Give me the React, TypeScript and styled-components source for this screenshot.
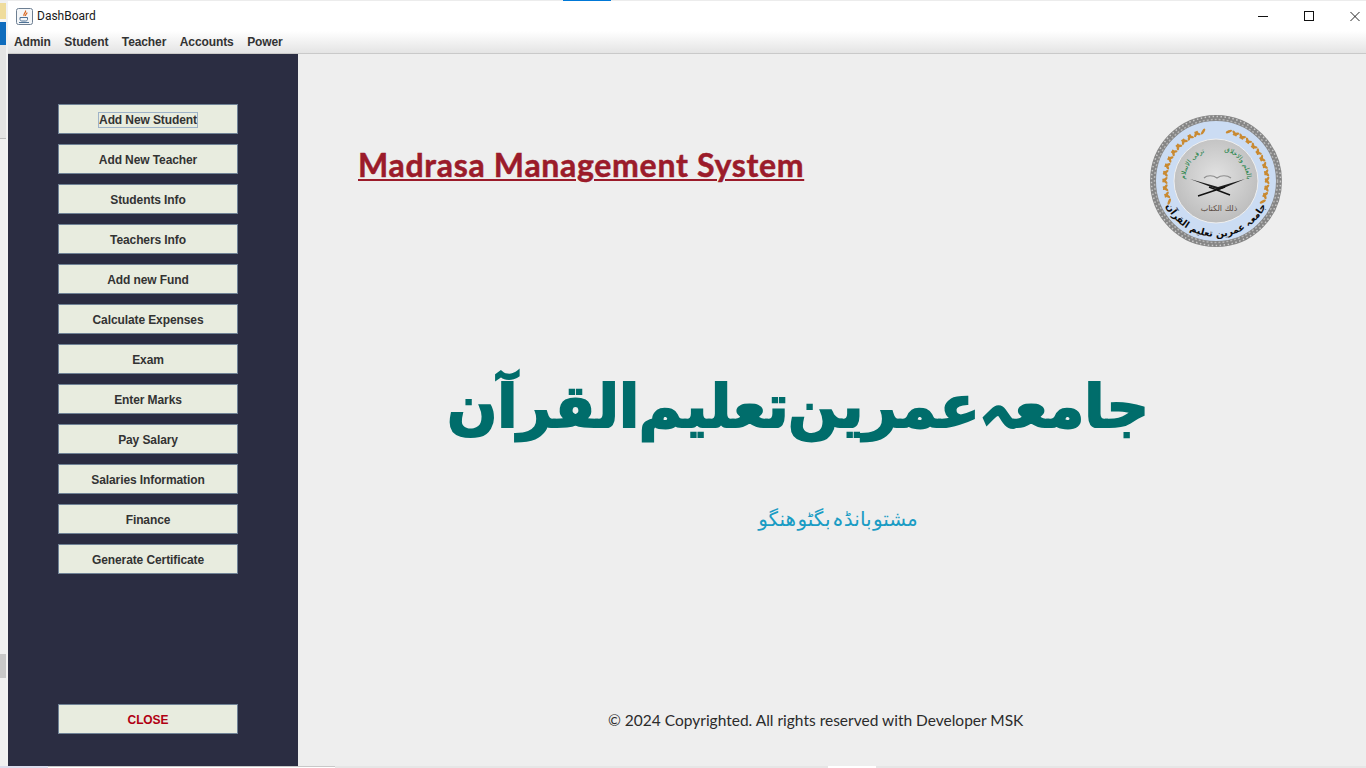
import React from "react"
import styled, { createGlobalStyle } from "styled-components"

const GlobalStyle = createGlobalStyle`
  html, body {
    margin: 0;
    padding: 0;
    height: 100%;
    overflow: hidden;
    background: #f0f0f0;
  }
  #root {
    height: 100%;
  }
`

const sideItems = [
  "Add New Student",
  "Add New Teacher",
  "Students Info",
  "Teachers Info",
  "Add new Fund",
  "Calculate Expenses",
  "Exam",
  "Enter Marks",
  "Pay Salary",
  "Salaries Information",
  "Finance",
  "Generate Certificate",
]

const menus = ["Admin", "Student", "Teacher", "Accounts", "Power"]

const CX = 67
const CY = 67

// wreath leaves, angle measured clockwise from the top of the crest
const leaves = Array.from({ length: 12 }, (_, i) => 18 + i * 8.4)

const JavaIcon = () => (
  <svg width="17" height="17" viewBox="0 0 17 17">
    <rect x="0.5" y="0.5" width="16" height="16" rx="2" fill="#f4f6f8" stroke="#6d7f92" />
    <path d="M9.5 2.5c1 2-2.500 3-1.500 5.500M11 4.500c0 1.500-2 2-1.500 3.500" fill="none" stroke="#d9661f" strokeWidth="1.200" />
    <path d="M4 9.500h7.500v2c0 1-1 1.500-2 1.500h-3.500c-1 0-2-.5-2-1.500z" fill="none" stroke="#4f7396" strokeWidth="1" />
    <path d="M3 14.500h10" stroke="#4f7396" strokeWidth="1" />
  </svg>
)

const Leaf = ({ angle, side }: { angle: number; side: 1 | -1 }) => (
  <g transform={`rotate(${side * angle} ${CX} ${CY})`}>
    <ellipse cx={CX - 3} cy={CY - 51} rx="1.3" ry="3.4" fill="#c98a32" transform={`rotate(${side * 50} ${CX - 3} ${CY - 51})`} />
    <ellipse cx={CX + 3} cy={CY - 51} rx="1.3" ry="3.4" fill="#c98a32" transform={`rotate(${-side * 50} ${CX + 3} ${CY - 51})`} />
  </g>
)

const Crest = () => (
  <svg width="134" height="134" viewBox="0 0 134 134">
    <defs>
      <radialGradient id="crestInner" cx="50%" cy="45%" r="55%">
        <stop offset="0%" stopColor="#e2e2e2" />
        <stop offset="100%" stopColor="#bdbdbd" />
      </radialGradient>
      <path id="crestBottom" d="M17 92a56 56 0 0 0 100 0" fill="none" />
      <path id="crestLeft" d="M36 70a31 31 0 0 1 24-33" fill="none" />
      <path id="crestRight" d="M71 36a31 31 0 0 1 27 34" fill="none" />
    </defs>
    <circle cx={CX} cy={CY} r="62" fill="#cbdcf3" />
    <circle cx={CX} cy={CY} r="63" fill="none" stroke="#858585" strokeWidth="6" />
    <circle cx={CX} cy={CY} r="64.5" fill="none" stroke="#c9c9c9" strokeWidth="1.500" strokeDasharray="1.500 2.500" />
    <circle cx={CX} cy={CY} r="61.5" fill="none" stroke="#b5b5b5" strokeWidth="1.500" strokeDasharray="2 2" />
    <circle cx={CX} cy={CY} r="42" fill="url(#crestInner)" stroke="#efefef" strokeWidth="1" />
    {leaves.map((a) => (
      <Leaf key={`l${a}`} angle={a} side={-1} />
    ))}
    {leaves.map((a) => (
      <Leaf key={`r${a}`} angle={a} side={1} />
    ))}
    <path d="M55 64c3-3 9-3 13 0 4-3 10-3 14 0" fill="none" stroke="#8d8d8d" strokeWidth="1.200" />
    <path d="M41 65l28 8 27-8-26 11z" fill="#1d1d1d" />
    <path d="M60 73l21 8M76 73l-27 9" stroke="#111" strokeWidth="1.400" />
    <text fontFamily="'DejaVu Sans', sans-serif" fontSize="9.500" fontWeight="700" fill="#0b0b0b">
      <textPath href="#crestBottom" startOffset="50%" textAnchor="middle">جامعہ عمرین تعلیم القرآن</textPath>
    </text>
    <text x="70" y="97" textAnchor="middle" fontFamily="'DejaVu Sans', sans-serif" fontSize="8" fill="#5a4a42">ذلك الكتاب</text>
    <text fontFamily="'DejaVu Sans', sans-serif" fontSize="6.500" fill="#14803f">
      <textPath href="#crestLeft" startOffset="50%" textAnchor="middle">ترقی الاسلام</textPath>
    </text>
    <text fontFamily="'DejaVu Sans', sans-serif" fontSize="6.500" fill="#14803f">
      <textPath href="#crestRight" startOffset="50%" textAnchor="middle">بالعلم والاخلاق</textPath>
    </text>
  </svg>
)

const App = () => (
  <>
    <GlobalStyle />
    <Desktop>
      <TopEdge>
        <ActiveTab />
      </TopEdge>
      <Middle>
        <DesktopStrip />
        <Window>
          <TitleBar>
            <TitleLeft>
              <JavaIcon />
              <TitleText>DashBoard</TitleText>
            </TitleLeft>
            <WindowControls>
              <ControlButton aria-label="Minimize">
                <svg width="10" height="10" viewBox="0 0 10 10"><path d="M0 5.500h10" stroke="#111" strokeWidth="1" /></svg>
              </ControlButton>
              <ControlButton aria-label="Maximize">
                <svg width="10" height="10" viewBox="0 0 10 10"><rect x="0.500" y="0.500" width="9" height="9" fill="none" stroke="#111" strokeWidth="1" /></svg>
              </ControlButton>
              <ControlButton aria-label="Close">
                <svg width="11" height="11" viewBox="0 0 11 11"><path d="M.5.500l10 10M10.500.500l-10 10" stroke="#111" strokeWidth="1" /></svg>
              </ControlButton>
            </WindowControls>
          </TitleBar>
          <MenuBar>
            {menus.map((m) => (
              <MenuItem key={m}>{m}</MenuItem>
            ))}
          </MenuBar>
          <Body>
            <Sidebar>
              <SideList>
                {sideItems.map((item, i) => (
                  <SideButton key={item}>
                    {i === 0 ? <FocusRing>{item}</FocusRing> : item}
                  </SideButton>
                ))}
              </SideList>
              <SideButton $danger>CLOSE</SideButton>
            </Sidebar>
            <Main>
              <TopRow>
                <Heading>Madrasa Management System</Heading>
                <CrestWrap>
                  <Crest />
                </CrestWrap>
              </TopRow>
              <Center>
                <UrduTitle lang="ur" dir="rtl">جامعہ عمرین تعلیم القرآن</UrduTitle>
                <UrduSub lang="ur" dir="rtl">مشتو بانڈہ بگٹو ھنگو</UrduSub>
              </Center>
              <Copyright>© 2024 Copyrighted. All rights reserved with Developer MSK</Copyright>
            </Main>
          </Body>
        </Window>
      </Middle>
      <BottomEdge>
        <BottomLeft />
        <BottomTask />
        <BottomRest />
        <BottomActive />
        <BottomRest $grow />
      </BottomEdge>
    </Desktop>
  </>
)

export default App

const Desktop = styled.div`
  display: flex;
  flex-direction: column;
  width: 1366px;
  height: 768px;
  overflow: hidden;
  background: #f0f0f0;
`

const TopEdge = styled.div`
  height: 1px;
  flex-shrink: 0;
  padding-left: 563px;
  background: #ececec;
`

const ActiveTab = styled.div`
  width: 48px;
  height: 1px;
  background: #0078d7;
`

const Middle = styled.div`
  flex: 1;
  display: flex;
  min-height: 0;
`

const DesktopStrip = styled.div`
  width: 6px;
  flex-shrink: 0;
  background: linear-gradient(
    to bottom,
    #f0f0f0 0,
    #f0f0f0 2px,
    #efdc9c 2px,
    #efdc9c 18px,
    #f5f5f5 18px,
    #f5f5f5 21px,
    #0f6cbd 21px,
    #0f6cbd 44px,
    #e4e4e4 44px,
    #e4e4e4 137px,
    #bcbcbc 137px,
    #bcbcbc 138px,
    #f0f0f0 138px,
    #f0f0f0 653px,
    #c8c8c8 653px,
    #c8c8c8 677px,
    #f0f0f0 677px
  );
`

const Window = styled.div`
  flex: 1;
  display: flex;
  flex-direction: column;
  min-width: 0;
  border-left: 2px solid #f2f2f2;
`

const TitleBar = styled.div`
  height: 30px;
  display: flex;
  align-items: center;
  justify-content: space-between;
  background: #fff;
`

const TitleLeft = styled.div`
  display: flex;
  align-items: center;
  gap: 4px;
  padding-left: 8px;
`

const TitleText = styled.span`
  font: 12px Roboto, "Liberation Sans", sans-serif;
  color: #1a1a1a;
`

const WindowControls = styled.div`
  display: flex;
  align-items: center;
  gap: 36px;
  padding-right: 6px;
`

const ControlButton = styled.div`
  width: 10px;
  height: 30px;
  display: flex;
  align-items: center;
  justify-content: center;
`

const MenuBar = styled.div`
  height: 22px;
  display: flex;
  align-items: center;
  gap: 13.5px;
  padding-left: 6px;
  background: linear-gradient(to bottom, #ffffff, #e4e4e4);
  border-bottom: 1px solid #c9c9c9;
`

const MenuItem = styled.span`
  font: bold 12px "Liberation Sans", Arial, sans-serif;
  letter-spacing: -0.1px;
  color: #333;
`

const Body = styled.div`
  flex: 1;
  display: flex;
  min-height: 0;
`

const Sidebar = styled.aside`
  width: 290px;
  flex-shrink: 0;
  box-sizing: border-box;
  padding: 50px 60px 32px 50px;
  background: #2b2d42;
  display: flex;
  flex-direction: column;
  justify-content: space-between;
`

const SideList = styled.div`
  display: flex;
  flex-direction: column;
  gap: 10px;
`

const SideButton = styled.div<{ $danger?: boolean }>`
  width: 180px;
  height: 30px;
  box-sizing: border-box;
  padding-top: 2px;
  display: flex;
  align-items: center;
  justify-content: center;
  background: #e8ecdf;
  border: 1px solid #6f8296;
  font: bold 12px "Liberation Sans", Arial, sans-serif;
  letter-spacing: -0.1px;
  color: ${(p) => (p.$danger ? "#b00012" : "#333")};
`

const FocusRing = styled.span`
  outline: 1px solid #9fb3c8;
  line-height: 14px;
`

const Main = styled.main`
  flex: 1;
  min-width: 0;
  display: flex;
  flex-direction: column;
  background: #eeeeee;
`

const TopRow = styled.div`
  display: flex;
  justify-content: space-between;
  align-items: flex-start;
  padding: 60px 83px 0 60px;
`

const Heading = styled.h1`
  margin: 34px 0 0;
  font: bold 32px Lato, "Liberation Sans", sans-serif;
  line-height: 34px;
  letter-spacing: 0.7px;
  -webkit-text-stroke: 0.5px #9b1b2a;
  color: #9b1b2a;
  text-decoration: underline;
  text-decoration-thickness: 2px;
  text-underline-offset: 2px;
  white-space: nowrap;
`

const CrestWrap = styled.div`
  display: flex;
`

const Center = styled.div`
  flex: 1;
  display: flex;
  flex-direction: column;
  align-items: center;
  padding-top: 114px;
  padding-right: 68px;
`

const UrduTitle = styled.div`
  font: bold 59px "DejaVu Sans", sans-serif;
  line-height: 90px;
  word-spacing: -21px;
  -webkit-text-stroke: 2px #006d6b;
  color: #006d6b;
  white-space: nowrap;
`

const UrduSub = styled.div`
  margin: 49px 0 0 80px;
  font: 20px "DejaVu Sans", sans-serif;
  line-height: 36px;
  word-spacing: -5px;
  color: #1a9cc4;
  white-space: nowrap;
`

const Copyright = styled.footer`
  padding: 0 0 36px 310px;
  font: 400 15.5px Lato, "Liberation Sans", sans-serif;
  line-height: 20px;
  color: #2b2b2b;
  white-space: nowrap;
`

const BottomEdge = styled.div`
  height: 2px;
  flex-shrink: 0;
  display: flex;
`

const BottomLeft = styled.div`
  width: 48px;
  background: #dcdcec;
`

const BottomTask = styled.div`
  width: 287px;
  background: #fff;
  border-top: 1px solid #c8c8c8;
  box-sizing: border-box;
`

const BottomRest = styled.div<{ $grow?: boolean }>`
  width: 493px;
  flex: ${(p) => (p.$grow ? 1 : "none")};
  background: #e6e6e6;
`

const BottomActive = styled.div`
  width: 48px;
  background: #fff;
`
